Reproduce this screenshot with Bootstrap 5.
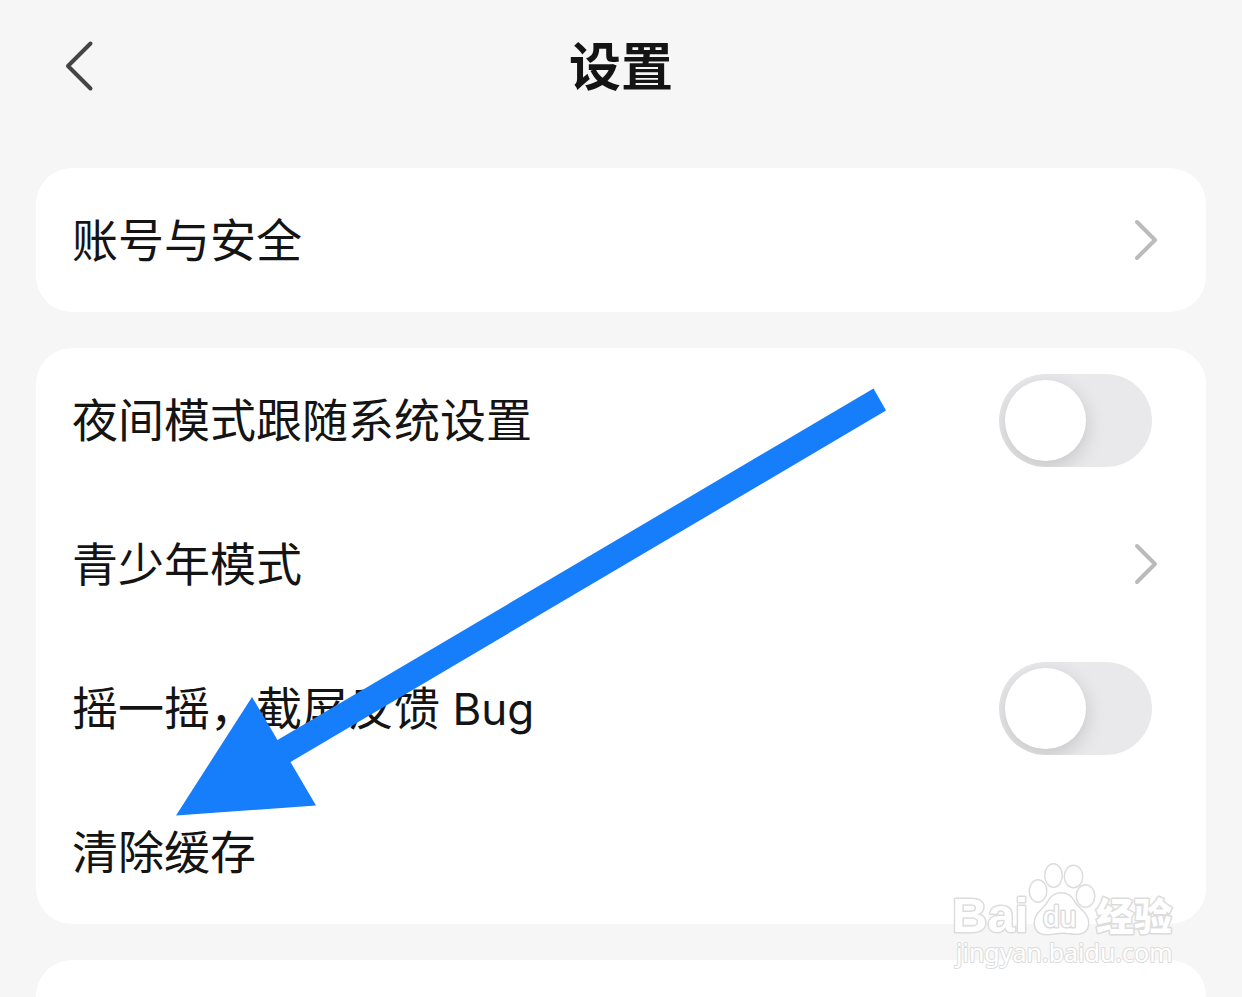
<!DOCTYPE html>
<html lang="zh-CN">
<head>
<meta charset="utf-8">
<meta name="viewport" content="width=device-width, initial-scale=1">
<title>设置</title>
<link href="https://cdn.jsdelivr.net/npm/bootstrap@5.3.0/dist/css/bootstrap.min.css" rel="stylesheet">
<style>
  body { background: #f6f6f6; color: #141414; font-family: Inter, "Noto Sans CJK SC", sans-serif; }
  .top-bar { display: grid; grid-template-columns: 1fr auto 1fr; height: 132px; padding: 0 60px; }
  .top-bar h1 { font-size: 52px; line-height: 72px; font-weight: 700; }
  .groups { gap: 36px; padding: 36px 36px 0; }
  .group { background: #fff; border-radius: 36px; }
  .group-tail { border-radius: 36px 36px 0 0; }
  .setting { height: 144px; padding: 0 48px 0 36px; font-size: 46px; line-height: 64px; color: inherit; text-align: left; }
  .setting-switch { padding-right: 54px; }
  .latin { font-size: 44px; }
  .toggle { appearance: none; width: 153px; height: 93px; border-radius: 47px; background: #e9e9eb; overflow: hidden; padding: 6px; cursor: pointer; }
  .toggle::before { content: ""; display: block; width: 81px; height: 81px; border-radius: 50%; background: #fff; box-shadow: 0 6px 20px rgba(0, 0, 0, .16); }
  .toggle:checked { background: #34c759; }
  .toggle:checked::before { margin-left: auto; }
  .overlay { pointer-events: none; }
  .site-logo { right: 26px; bottom: -52px; z-index: 2; }
</style>
</head>
<body class="min-vh-100 d-flex flex-column">
<header class="top-bar align-items-center">
  <button type="button" class="btn p-0 border-0 lh-1 text-start" aria-label="返回">
    <svg width="38" height="52" viewBox="0 0 38 52" fill="none" stroke="#444" stroke-width="4" stroke-linecap="round" stroke-linejoin="round"><path d="M30.500 3.500 8 26l22.500 22.500"/></svg>
  </button>
  <h1 class="m-0 pt-1">设置</h1>
</header>

<main class="groups d-flex flex-column flex-grow-1">
  <section class="group">
    <a href="#account" class="setting d-flex align-items-center justify-content-between text-decoration-none">
      <span>账号与安全</span>
      <svg width="24" height="42" viewBox="0 0 24 42" fill="none" stroke="#bbb" stroke-width="4" stroke-linecap="round" stroke-linejoin="round"><path d="M3 3l18 18L3 39"/></svg>
    </a>
  </section>

  <section class="group position-relative">
    <div class="setting setting-switch d-flex align-items-center justify-content-between">
      <label for="night">夜间模式跟随系统设置</label>
      <input class="toggle flex-shrink-0" type="checkbox" role="switch" id="night">
    </div>
    <a href="#teen" class="setting d-flex align-items-center justify-content-between text-decoration-none">
      <span>青少年模式</span>
      <svg width="24" height="42" viewBox="0 0 24 42" fill="none" stroke="#bbb" stroke-width="4" stroke-linecap="round" stroke-linejoin="round"><path d="M3 3l18 18L3 39"/></svg>
    </a>
    <div class="setting setting-switch d-flex align-items-center justify-content-between">
      <label for="shake">摇一摇，截屏反馈<span class="latin"> Bug</span></label>
      <input class="toggle flex-shrink-0" type="checkbox" role="switch" id="shake">
    </div>
    <button type="button" class="setting btn border-0 w-100 d-flex align-items-center">清除缓存</button>

    <!-- Arrow pointing at the clear-cache row -->
    <svg class="overlay position-absolute top-0 start-0 w-100 h-100" viewBox="36 348 1170 576" preserveAspectRatio="xMinYMin meet" aria-hidden="true">
      <path fill="#167efb" d="M176 815.500 252 697l25.500 43L873.500 388.500 886 410.500 290.500 762 316 805.500z"/>
    </svg>

    <!-- Baidu Jingyan watermark -->
    <svg class="overlay site-logo position-absolute" width="230" height="116" viewBox="950 860 230 116" fill="#fff" stroke="#dcdcdc" stroke-width="3" stroke-linejoin="round" paint-order="stroke">
      <text x="952" y="932" font-family="Liberation Sans, sans-serif" font-weight="700" font-size="49">Bai</text>
      <g stroke-width="3">
        <ellipse cx="1038" cy="891" rx="8" ry="10.500"/>
        <ellipse cx="1053.500" cy="875.500" rx="8" ry="11"/>
        <ellipse cx="1073.500" cy="876.500" rx="8.500" ry="10.500"/>
        <ellipse cx="1085.500" cy="896" rx="8.500" ry="10.500"/>
        <path d="M1061 893.500c7 0 10 3 13 8.500 4 7 14 11 14 21 0 8-5 10.500-12 10.500-6 0-9-1-14-1s-9 1.500-15 1.500c-8 0-12-4-12-11.500 0-9 9-13 13-20 3-5 6-9 13-9z"/>
      </g>
      <text x="1043" y="927" font-family="Liberation Sans, sans-serif" font-size="30">du</text>
      <text x="1096" y="930" font-family="Noto Sans CJK SC, sans-serif" font-weight="900" font-size="38">经验</text>
      <text x="956" y="962" font-family="Noto Sans, sans-serif" font-size="25" stroke-width="2">jingyan.baidu.com</text>
    </svg>
  </section>

  <section class="group group-tail flex-grow-1"></section>
</main>
<script src="https://cdn.jsdelivr.net/npm/bootstrap@5.3.0/dist/js/bootstrap.bundle.min.js"></script>
</body>
</html>
